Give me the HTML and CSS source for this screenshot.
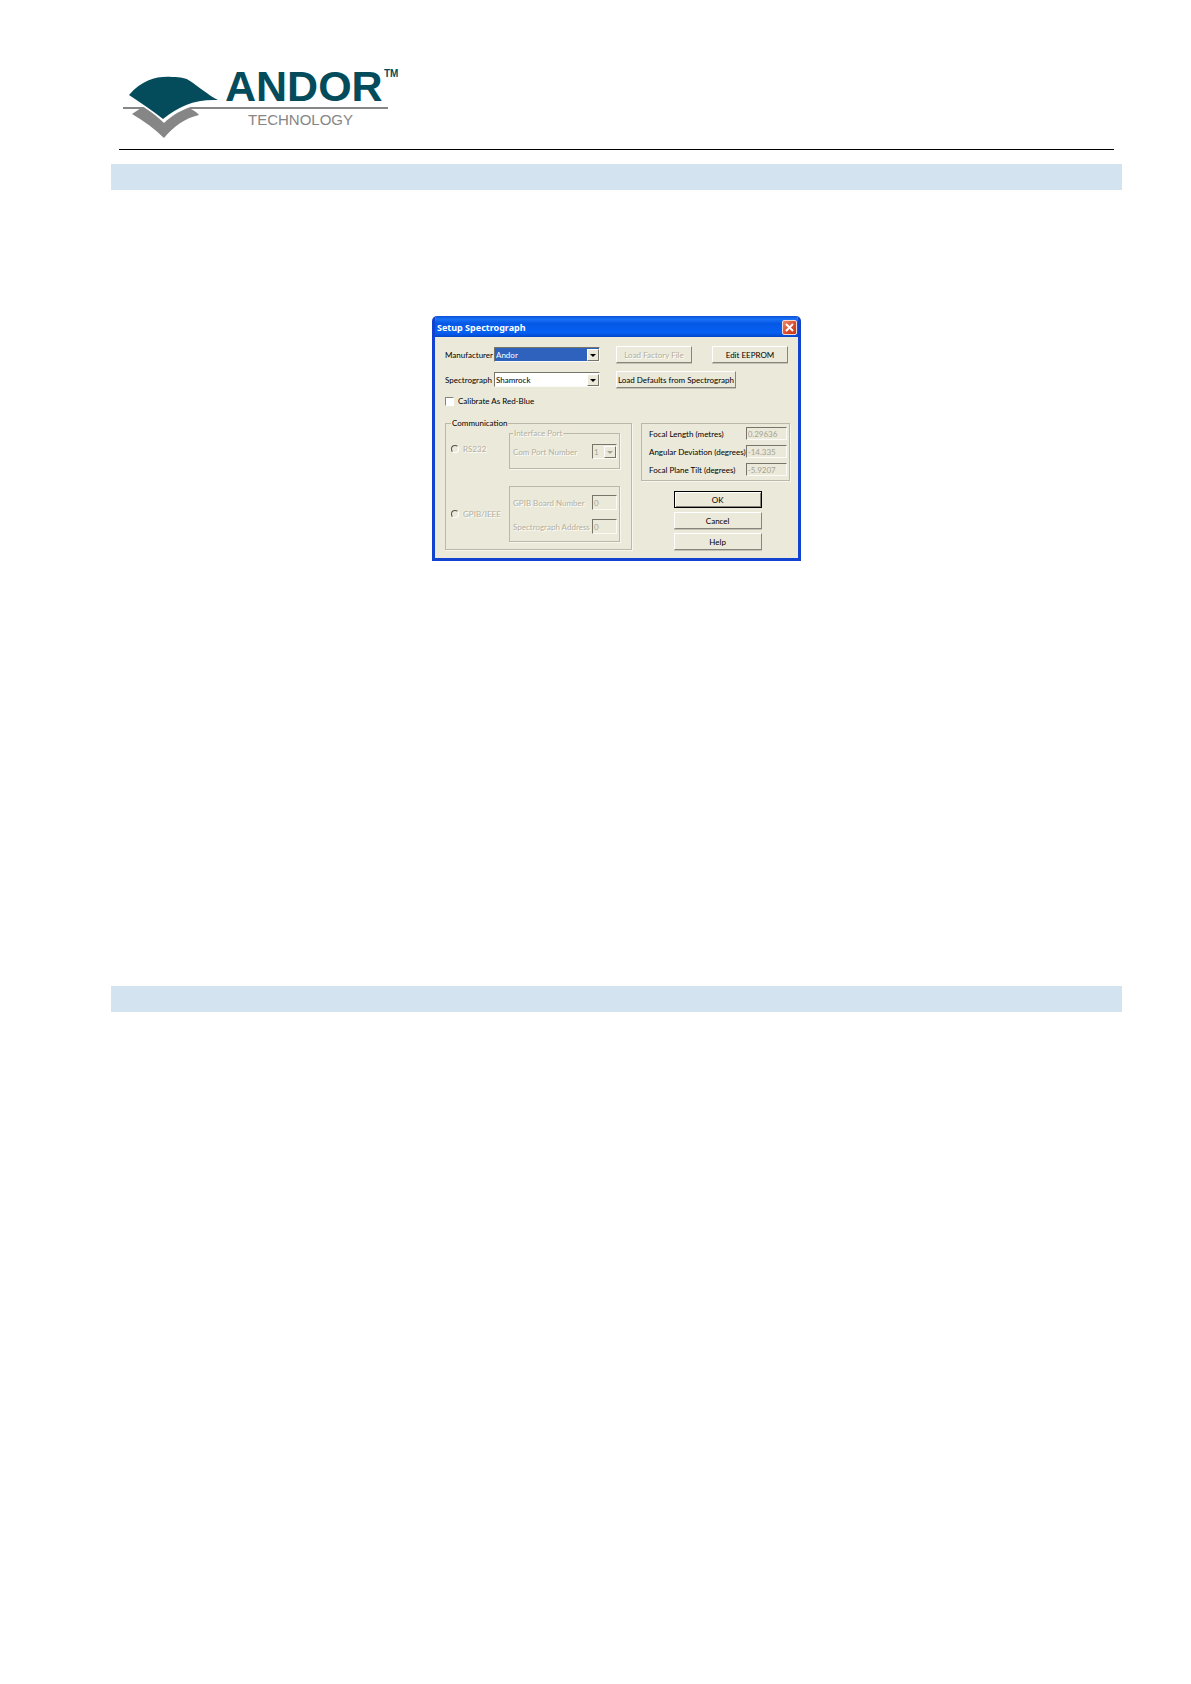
FILE: index.html
```html
<!DOCTYPE html>
<html lang="en">
<head>
<meta charset="UTF-8">
<title>Andor Technology - Setup Spectrograph</title>
<link rel="stylesheet" href="styles.css">
</head>
<body>
	<header class="header">
		<svg class="logo" width="284" height="78" viewBox="0 0 284 78" role="img" aria-label="Andor Technology">
			<path class="logo-line" d="M4 43H269V45H4Z" />
			<path class="logo-grey" d="M13 50L22 44H70C74 46 78 48 80 51C66 54 54 63 45 74C36 65 25 57 13 50Z" />
			<path class="logo-gap" d="M8 32C20 40 34 48 45 59C58 47 74 39 99 39V34H8Z" />
			<path class="logo-blue" d="M10 31C24 15 39 12 53 13C62 13 67 14 71 17C79 22 89 31 99 36C76 35 60 42 44 55C34 47 22 39 10 31Z" />
			<text class="logo-name" x="106" y="37">ANDOR</text>
			<text class="logo-tm" x="265" y="13">TM</text>
			<text class="logo-sub" x="129" y="61">TECHNOLOGY</text>
		</svg>
	</header>

	<main>
		<section class="section">
			<div class="bar"></div>

			<form class="dialog" action="#">
				<div class="titlebar">
					<h1 class="title">Setup Spectrograph</h1>
					<button type="button" class="close" aria-label="Close">
						<svg width="9" height="9" viewBox="0 0 9 9"><path d="M1 1L8 8M8 1L1 8" /></svg>
					</button>
				</div>

				<div class="content">
					<div class="row">
						<label class="row-label" for="manufacturer">Manufacturer</label>
						<span class="combo">
							<select id="manufacturer" class="selected"><option>Andor</option></select>
							<span class="arrow"></span>
						</span>
						<button type="button" class="btn" disabled>Load Factory File</button>
						<button type="button" class="btn btn-last">Edit EEPROM</button>
					</div>
					<div class="row">
						<label class="row-label" for="spectrograph">Spectrograph</label>
						<span class="combo">
							<select id="spectrograph"><option>Shamrock</option></select>
							<span class="arrow"></span>
						</span>
						<button type="button" class="btn btn-wide">Load Defaults from Spectrograph</button>
					</div>
					<div class="check-row">
						<input type="checkbox" id="calibrate">
						<label for="calibrate">Calibrate As Red-Blue</label>
					</div>

					<div class="columns">
						<fieldset class="group communication">
							<legend>Communication</legend>
							<div class="port">
								<div class="choice">
									<input type="radio" name="port" id="rs232" disabled>
									<label for="rs232" class="off">RS232</label>
								</div>
								<fieldset class="group subgroup" disabled>
									<legend class="off">Interface Port</legend>
									<div class="field">
										<label for="com" class="off">Com Port Number</label>
										<span class="combo combo-small">
											<select id="com"><option>1</option></select>
											<span class="arrow"></span>
										</span>
									</div>
								</fieldset>
							</div>
							<div class="port">
								<div class="choice">
									<input type="radio" name="port" id="gpib" disabled>
									<label for="gpib" class="off">GPIB/IEEE</label>
								</div>
								<fieldset class="group subgroup gpib" disabled>
									<div class="field">
										<label for="board" class="off">GPIB Board Number</label>
										<input type="text" id="board" class="short" value="0">
									</div>
									<div class="field">
										<label for="address" class="off">Spectrograph Address</label>
										<input type="text" id="address" class="short" value="0">
									</div>
								</fieldset>
							</div>
						</fieldset>

						<div class="side">
							<div class="group optics">
								<div class="field">
									<label for="focal">Focal Length (metres)</label>
									<input type="text" id="focal" value="0.29636" disabled>
								</div>
								<div class="field">
									<label for="angular">Angular Deviation (degrees)</label>
									<input type="text" id="angular" value="-14.335" disabled>
								</div>
								<div class="field">
									<label for="tilt">Focal Plane Tilt (degrees)</label>
									<input type="text" id="tilt" value="-5.9207" disabled>
								</div>
							</div>
							<div class="actions">
								<button type="submit" class="btn btn-default">OK</button>
								<button type="button" class="btn">Cancel</button>
								<button type="button" class="btn">Help</button>
							</div>
						</div>
					</div>
				</div>
			</form>
		</section>

		<section class="section">
			<div class="bar"></div>
		</section>
	</main>
</body>
</html>
```

FILE: styles.css
```css
* {
	box-sizing: border-box;
}

body {
	margin: 0;
	padding: 64px 69px 0 111px;
	background: #fff;
	color: #000;
	font-family: "Liberation Sans", Arial, sans-serif;
	font-size: 8px;
	line-height: 10px;
}

/* page header */
.header {
	margin: 0 8px 14px;
	border-bottom: 1px solid #000;
	padding-bottom: 7px;
}

.logo {
	display: block;
	overflow: visible;
}

.logo-line,
.logo-grey,
.logo-sub {
	fill: #868686;
}

.logo-gap {
	fill: #fff;
}

.logo-blue,
.logo-name,
.logo-tm {
	fill: #044c5c;
}

.logo-name {
	font-size: 43px;
	font-weight: bold;
}

.logo-tm {
	font-size: 10px;
	font-weight: bold;
}

.logo-sub {
	font-size: 15px;
}

.bar {
	height: 26px;
	background: #d3e3ef;
}

/* dialog window */
.dialog {
	max-width: 369px;
	margin: 126px auto 425px;
	border: 3px solid #1243cf;
	border-top: 0;
	border-radius: 5px 5px 0 0;
	background: #ebe9d9;
	font-family: Lato, "Liberation Sans", sans-serif;
	overflow: hidden;
}

.titlebar {
	display: flex;
	align-items: center;
	justify-content: space-between;
	height: 21px;
	margin: 0 -3px;
	padding: 2px 4px 0 5px;
	background: linear-gradient(#0a50d8, #1a72f4 15%, #0558e6 35%, #0560f2 80%, #0345c8);
}

.title {
	margin: 0;
	color: #fff;
	font-family: "Noto Sans", sans-serif;
	font-size: 9px;
	font-weight: bold;
}

.close {
	display: flex;
	align-items: center;
	justify-content: center;
	width: 15px;
	height: 15px;
	padding: 0;
	border: 1px solid #f4d8d0;
	border-radius: 2px;
	background: linear-gradient(135deg, #ec8a6c, #d9482a 60%, #c03a1c);
}

.close path {
	stroke: #fff;
	stroke-width: 2;
}

.content {
	padding: 9px 10px 8px;
}

.row {
	display: flex;
	align-items: center;
	height: 17px;
	margin-bottom: 8px;
}

.row-label {
	width: 49px;
}

label {
	white-space: nowrap;
}

/* controls */
input,
select,
button {
	margin: 0;
	font: inherit;
	color: inherit;
}

input[type="text"],
select {
	appearance: none;
	height: 15px;
	padding: 0 1px;
	border: 1px solid;
	border-color: #77756a #fbfaf4 #fbfaf4 #77756a;
	border-radius: 0;
	background: #fff;
}

input[type="text"]:disabled,
select:disabled {
	background: #ebe9d9;
	color: #a5a394;
	opacity: 1;
}

.combo {
	position: relative;
	width: 106px;
	margin-right: 16px;
}

.combo select {
	display: block;
	width: 100%;
}

.combo .selected {
	background: #2f62bd;
	color: #fff;
}

.arrow {
	position: absolute;
	top: 2px;
	right: 1px;
	display: flex;
	align-items: center;
	justify-content: center;
	width: 12px;
	height: 12px;
	border: 1px solid;
	border-color: #fff #77756a #77756a #fff;
	background: #ebe9d9;
	pointer-events: none;
}

.arrow::after {
	content: "";
	border: 3px solid transparent;
	border-top-color: #000;
	border-bottom: 0;
}

.combo-small {
	width: 25px;
	margin-right: 0;
}

.combo-small .arrow::after {
	border-top-color: #a5a394;
}

.btn {
	width: 76px;
	height: 17px;
	padding: 0;
	border: 1px solid;
	border-color: #fff #88867a #88867a #fff;
	background: #ebe9d9;
	box-shadow: 0 1px #c4c2b4;
	white-space: nowrap;
}

.btn:disabled {
	color: #b3b0a0;
	text-shadow: 1px 1px #fff;
}

.btn-last {
	margin-left: auto;
}

.btn-wide {
	width: 120px;
}

.btn-default {
	border-color: #000;
	box-shadow: inset 1px 1px #fff, inset -1px -1px #88867a;
}

.off {
	color: #b3b0a0;
	text-shadow: 1px 1px #fff;
}

.check-row {
	display: flex;
	align-items: center;
	gap: 4px;
	margin-bottom: 12px;
}

input[type="checkbox"],
input[type="radio"] {
	appearance: none;
	width: 9px;
	height: 9px;
	border: 1px solid;
	border-color: #88867a #fff #fff #88867a;
	background: #fff;
}

input[type="radio"] {
	width: 8px;
	height: 8px;
	border-color: #55534a #fff #fff #55534a;
	border-radius: 50%;
	background: #ebe9d9;
}

/* lower half */
.columns {
	display: flex;
	gap: 9px;
}

.group {
	min-width: 0;
	margin: 0;
	border: 1px solid #bbb8a8;
	box-shadow: 1px 1px #f8f7ef;
}

.group legend {
	margin: 0;
	padding: 0 1px;
}

.communication {
	display: flex;
	flex: none;
	flex-direction: column;
	gap: 17px;
	width: 187px;
	padding: 0 11px 7px 5px;
}

.port {
	display: flex;
}

.choice {
	display: flex;
	flex: none;
	align-items: center;
	gap: 4px;
	width: 58px;
}

.subgroup {
	flex: 1;
	padding: 6px 2px 9px 3px;
}

.gpib {
	display: flex;
	flex-direction: column;
	gap: 9px;
	padding: 8px 2px 7px 3px;
}

.field {
	display: flex;
	align-items: center;
	justify-content: space-between;
}

input.short {
	width: 25px;
}

.side {
	flex: 1;
	padding-top: 5px;
}

.optics {
	display: flex;
	flex-direction: column;
	gap: 5px;
	padding: 3px 2px 4px 7px;
}

.optics input[type="text"] {
	flex: none;
	width: 41px;
	height: 13px;
}

.actions {
	display: flex;
	flex-direction: column;
	gap: 4px;
	width: 88px;
	margin: 10px 28px 0 auto;
}

.actions .btn {
	width: 100%;
}
```
